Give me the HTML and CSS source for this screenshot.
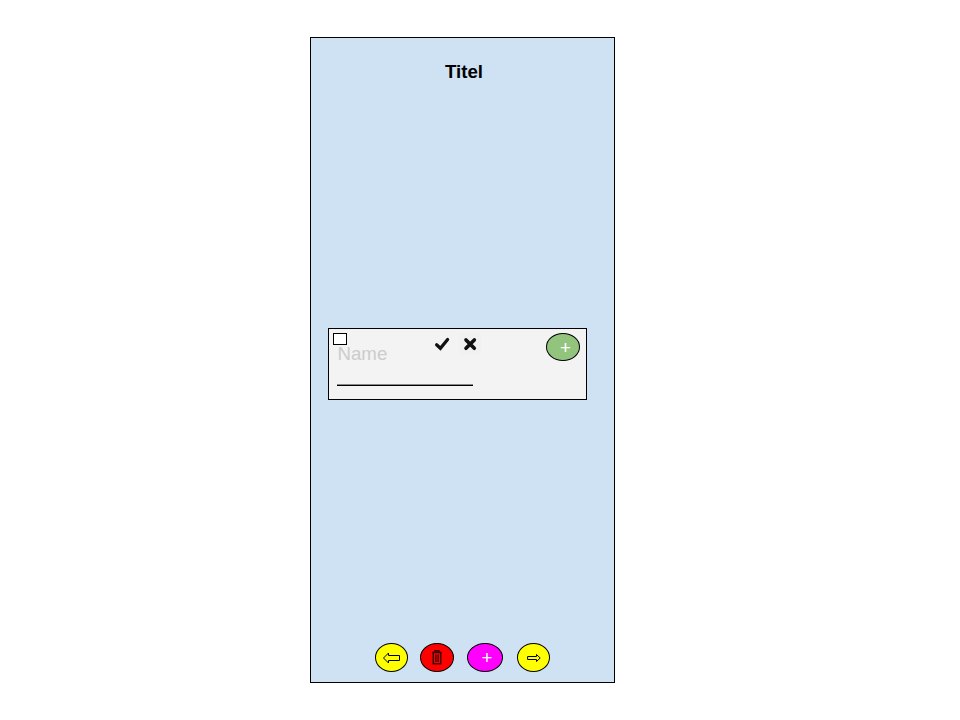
FILE: index.html
```html
<!DOCTYPE html>
<html lang="de">
<head>
<meta charset="utf-8">
<title>Titel</title>
<link rel="stylesheet" href="styles.css">
</head>
<body>
<main class="screen">
  <h1 class="title">Titel</h1>
  <section class="card">
    <div class="field">
      <span class="checkbox"></span>
      <label class="name">Name</label>
      <span class="line"></span>
    </div>
    <div class="marks">
      <svg class="mark" width="16" height="16" viewBox="0 0 16 16"><path d="M2.6 8.8 6.4 12.3 13.6 3.4" fill="none" stroke="#111" stroke-width="3.2" stroke-linecap="round"/></svg>
      <span class="tile"><svg width="14" height="14" viewBox="0 0 14 14"><path d="M3 2.9 11.3 11.3M11.3 2.9 3 11.3" fill="none" stroke="#111" stroke-width="3.6" stroke-linecap="round"/></svg></span>
    </div>
    <button class="round add">+</button>
  </section>
  <nav class="actions">
    <button class="round back"><svg width="18" height="12" viewBox="0 0 18 12"><path d="M.5 6 5.5 1V3.5H16.5V8.5H5.5V11Z" fill="none" stroke="#000"/></svg></button>
    <button class="round delete"><svg width="10" height="15" viewBox="0 0 10 15"><path d="M.3 2.5H9.7M3 2V.8H7V2M1.3 3V13.7H8.7V3M3.8 4.5V12M6.2 4.5V12" fill="none" stroke="#300" stroke-width="1.4"/></svg></button>
    <button class="round new">+</button>
    <button class="round next"><svg width="14" height="8" viewBox="0 0 14 8"><path d="M13.2 4 9.5 .5V2.5H.6V5.5H9.5V7.5Z" fill="none" stroke="#000"/></svg></button>
  </nav>
</main>
</body>
</html>
```
FILE: styles.css
```css
* { box-sizing: border-box; }
body {
  margin: 0;
  padding: 37px 0 0 310px;
  background: #fff;
  font-family: "Liberation Sans", Arial, sans-serif;
  font-size: 18.67px;
}
.screen {
  display: flex;
  flex-direction: column;
  width: 305px;
  height: 646px;
  padding: 23px 17px 10px;
  background: #cfe2f3;
  border: 1px solid #000;
}
.title {
  margin: 0 0 0 117px;
  font-size: 18.67px;
  line-height: 22px;
}
.card {
  display: flex;
  width: 259px;
  height: 72px;
  margin-top: 245px;
  padding: 4px 6px 0 4px;
  background: #f3f3f3;
  border: 1px solid #000;
}
.field {
  display: flex;
  flex-direction: column;
  width: 101px;
}
.checkbox {
  width: 14px;
  height: 12px;
  background: #fff;
  border: 1px solid #000;
}
.name {
  margin: -2px 0 0 4.5px;
  line-height: 22px;
  color: #ccc;
}
.line {
  width: 136px;
  height: 2px;
  margin: 19px 0 0 4px;
  background: #000;
  border-top: 1px solid #888;
}
.marks { display: flex; height: 24px; }
.mark { margin-top: 3px; }
.tile {
  width: 22px;
  height: 22px;
  margin-left: 9px;
  padding: 4px;
  background: #f1f1f1;
}
.tile svg { display: block; }
.round {
  display: flex;
  align-items: center;
  justify-content: center;
  height: 29px;
  padding: 0;
  border: 1px solid #000;
  border-radius: 50%;
  color: #fff;
  font: inherit;
}
.add {
  width: 34px;
  height: 28px;
  margin-left: auto;
  padding: 2px 0 0 5px;
  background: #93c47d;
}
.actions {
  display: flex;
  margin: auto 0 0 47px;
}
.back { width: 33px; background: #ff0; }
.delete { width: 34px; margin-left: 12px; background: #f00; }
.new { width: 36px; margin-left: 13px; padding-left: 4px; background: #f0f; }
.next { width: 33px; margin-left: 14px; background: #ff0; }
```
